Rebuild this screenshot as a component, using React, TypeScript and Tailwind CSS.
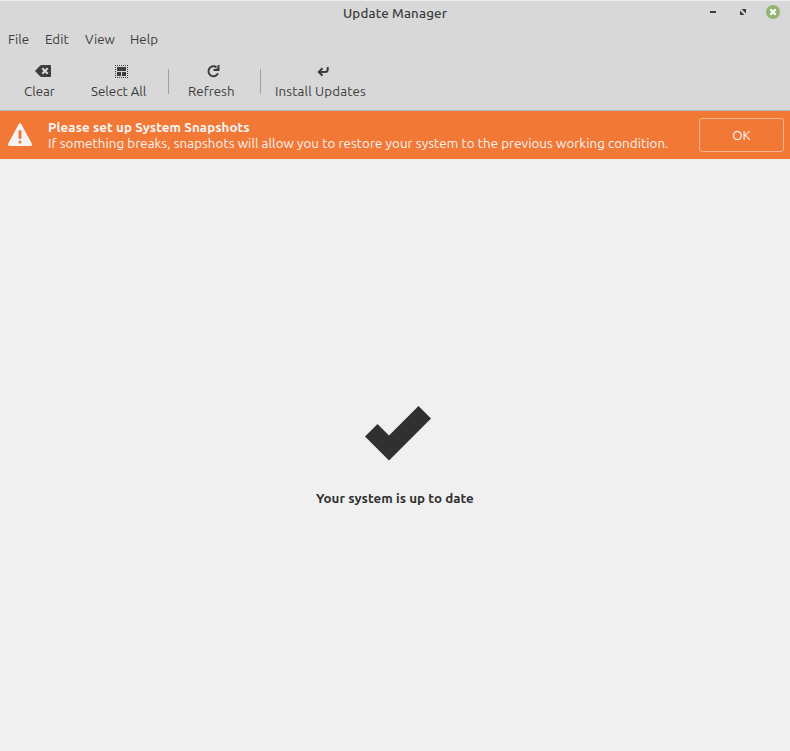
import type { ReactNode } from "react";

function ToolButton({ className, label, children }: { className: string; label: string; children: ReactNode }) {
  return (
    <button className={`flex flex-col items-start whitespace-nowrap ${className}`}>
      <span className="flex h-5 w-full items-center">{children}</span>
      <span className="mt-px block h-5 leading-5">{label}</span>
    </button>
  );
}

function ClearIcon() {
  return (
    <svg width="16" height="12" viewBox="0 0 16 12" className="ml-[11px]">
      <path d="M0 6 5 .7Q5.700 0 6.500 0H15q1 0 1 1v10q0 1-1 1H6.500q-.8 0-1.500-.7Z" fill="#3c3c3c" />
      <path d="m7.300 3.300 5.400 5.400m0-5.400-5.400 5.400" stroke="#dadada" strokeWidth="2" />
    </svg>
  );
}

function SelectAllIcon() {
  return (
    <svg width="13" height="13" viewBox="0 0 13 13" className="ml-[24px]" shapeRendering="crispEdges">
      <path d="M0 .5H13M0 12.500H13M.5 0V13M12.500 0V13" stroke="#3c3c3c" strokeDasharray="1 1" />
      <path d="M2 2h9v4H2zM2 7h4v4H2zM7 7h4v4H7z" fill="#3c3c3c" />
    </svg>
  );
}

export default function App() {
  return (
    <div className="flex h-[751px] w-[790px] flex-col overflow-hidden bg-[#f0f0f0] font-['Ubuntu','Noto_Sans',sans-serif] text-[13.333px] text-[#3c3c3c]">
      <header className="h-[111px] shrink-0 border-b border-[#b4b4b4] bg-[#d8d8d8]">
        <div className="flex h-[27px] items-start border-t border-[#efefef] pt-[2px]">
          <div className="ml-[343px] mt-px w-[104px] whitespace-nowrap font-medium leading-5 tracking-[0.16px]">Update Manager</div>
          <svg width="80" height="20" viewBox="0 0 80 20" className="ml-[255px] -mt-px">
            <path d="M8 9h6v2H8z" fill="#3c3c3c" />
            <path d="M39.500 7H44v4.500zM38 8.500v4.500h4.500z" fill="#3c3c3c" />
            <circle cx="71" cy="10" r="7" fill="#92b372" />
            <path d="m68.300 7.300 5.400 5.400m0-5.400-5.400 5.400" stroke="#fff" strokeWidth="2" />
          </svg>
        </div>
        <nav className="flex h-[25px] items-center whitespace-nowrap pl-2">
          <span className="w-[37px]">File</span>
          <span className="w-[40px]">Edit</span>
          <span className="w-[45px]">View</span>
          <span>Help</span>
        </nav>
        <div className="flex h-[58px] items-start pt-[9px]">
          <ToolButton className="ml-[24px] w-[67px]" label="Clear"><ClearIcon /></ToolButton>
          <ToolButton className="w-[77px]" label="Select All"><SelectAllIcon /></ToolButton>
          <div className="mt-2 h-[25px] w-px bg-[#a0a0a0]" />
          <ToolButton className="ml-[19px] w-[72px]" label="Refresh">
            <svg width="14" height="14" viewBox="0 0 14 14" className="ml-[18px]">
              <path d="M12 9.300A5 5 0 1 1 10.500 3.200" fill="none" stroke="#3c3c3c" strokeWidth="2" />
              <path d="M13.500 1v6H7.500V5H10L11.500 3.500V1z" fill="#3c3c3c" />
            </svg>
          </ToolButton>
          <div className="mt-2 h-[25px] w-px bg-[#a0a0a0]" />
          <ToolButton className="ml-[14px] tracking-[0.14px]" label="Install Updates">
            <svg width="13" height="12" viewBox="0 0 13 12" className="ml-[42px]">
              <path d="M2 7H8Q10.700 7 10.700 4.500V2M5.500 3.300 1.800 7l3.700 3.700" fill="none" stroke="#3c3c3c" strokeWidth="2" />
            </svg>
          </ToolButton>
        </div>
      </header>
      <section className="flex h-12 shrink-0 items-center bg-[#f27835] text-[#f5f5f5]">
        <svg width="24" height="24" viewBox="0 0 24 24" className="ml-2">
          <path d="M10.500 1.400Q12-.7 13.500 1.400L23.500 20Q25 23 22 23H2Q-1 23 .5 20Z" fill="#f3f3f3" />
          <rect x="10.500" y="7" width="3" height="9" rx="1.500" fill="#f27835" />
          <circle cx="12" cy="19" r="1.600" fill="#f27835" />
        </svg>
        <div className="ml-4 w-[651px] whitespace-nowrap pt-[2px] leading-4 tracking-[0.067px]">
          <p className="font-bold">Please set up System Snapshots</p>
          <p>If something breaks, snapshots will allow you to restore your system to the previous working condition.</p>
        </div>
        <button className="h-[34px] w-[85px] rounded-[3px] border border-[#f8b48d] pt-px">OK</button>
      </section>
      <main className="flex flex-col pt-[246px]">
        <svg width="68" height="57" viewBox="0 0 68 57" className="ml-[364px]">
          <path d="M1 31.500 13.500 19 25 30.500 54.500 1 67 13.500 25 55.500Z" fill="#303030" />
        </svg>
        <p className="ml-[316px] mt-[27px] whitespace-nowrap font-bold leading-5 tracking-[0.04px] text-[#303030]">Your system is up to date</p>
      </main>
    </div>
  );
}
